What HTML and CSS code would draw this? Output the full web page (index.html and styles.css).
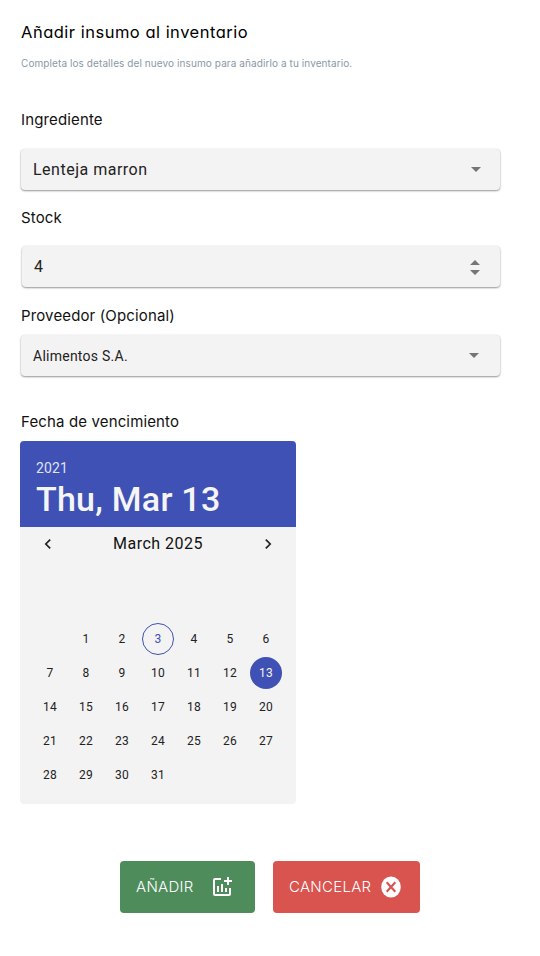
FILE: index.html
```html
<!DOCTYPE html>
<html lang="es">
<head>
<meta charset="utf-8">
<title>Añadir insumo al inventario</title>
<link rel="stylesheet" href="styles.css">
</head>
<body>
<main class="page">
  <h1 class="title"><span>Añadir insumo al inventario</span></h1>
  <p class="subtitle"><span>Completa los detalles del nuevo insumo para añadirlo a tu inventario.</span></p>

  <div class="label label-ingredient"><span>Ingrediente</span></div>
  <div class="field field-ingredient">
    <span class="value">Lenteja marron</span>
    <svg class="caret" width="10" height="5" viewBox="0 0 10 5"><path d="M0 0h10L5 5z"/></svg>
  </div>

  <div class="label label-stock"><span>Stock</span></div>
  <div class="field field-stock">
    <span class="value">4</span>
    <svg class="caret" width="10" height="15" viewBox="0 0 10 15"><path d="M0 5h10L5 0zM0 10h10L5 15z"/></svg>
  </div>

  <div class="label label-supplier"><span>Proveedor (Opcional)</span></div>
  <div class="field field-supplier">
    <span class="value small">Alimentos S.A.</span>
    <svg class="caret" width="10" height="5" viewBox="0 0 10 5"><path d="M0 0h10L5 5z"/></svg>
  </div>

  <div class="label label-date"><span>Fecha de vencimiento</span></div>
  <section class="calendar">
    <header class="cal-head">
      <div class="year"><span>2021</span></div>
      <div class="date"><span>Thu, Mar 13</span></div>
    </header>
    <nav class="cal-nav">
      <svg width="24" height="24" viewBox="0 0 24 24"><path d="M14.200 7.600L9.800 12l4.400 4.400" /></svg>
      <span class="month">March 2025</span>
      <svg width="24" height="24" viewBox="0 0 24 24"><path d="M9.800 7.600L14.200 12l-4.400 4.400" /></svg>
    </nav>
    <div class="days">
      <span></span><span>1</span><span>2</span><span class="today">3</span><span>4</span><span>5</span><span>6</span>
      <span>7</span><span>8</span><span>9</span><span>10</span><span>11</span><span>12</span><span class="selected">13</span>
      <span>14</span><span>15</span><span>16</span><span>17</span><span>18</span><span>19</span><span>20</span>
      <span>21</span><span>22</span><span>23</span><span>24</span><span>25</span><span>26</span><span>27</span>
      <span>28</span><span>29</span><span>30</span><span>31</span>
    </div>
  </section>

  <div class="actions">
    <button class="btn add"><span>AÑADIR</span>
      <svg width="24" height="24" viewBox="0 0 24 24" fill="#fff"><path d="M22 5v2h-3v3h-2V7h-3V5h3V2h2v3h3zM19 19H5V5h6V3H5a2 2 0 0 0-2 2v14a2 2 0 0 0 2 2h14a2 2 0 0 0 2-2v-6h-2v6zM15 13v4h2v-4h-2zM11 17h2V9h-2v8zM9 17v-6H7v6h2z"/></svg>
    </button>
    <button class="btn cancel"><span>CANCELAR</span>
      <svg width="20" height="22" viewBox="0 0 20 22"><ellipse cx="10" cy="11" rx="9.800" ry="10.500" fill="#fff"/><path d="M5.700 6.300l8.600 9.400M14.300 6.300l-8.600 9.400" stroke="#d9534f" stroke-width="2.100"/></svg>
    </button>
  </div>
</main>
</body>
</html>
```
FILE: styles.css
```css
* { box-sizing: border-box; }

body {
  margin: 0;
  background: #fff;
  font-family: Inter, sans-serif;
  color: #111;
}

.page {
  width: 540px;
  height: 956px;
  padding: 20px 40px 0 20px;
}

.title {
  margin: 0 0 0 1px;
  font-size: 16.5px;
  font-weight: 370;
  line-height: 24px;
  letter-spacing: 0.5px;
  font-feature-settings: "cv11";
  color: #000;
}

.subtitle {
  margin: 11px 0 0 1px;
  font-size: 10px;
  line-height: 16px;
  letter-spacing: 0.09px;
  color: #8a98a6;
}

.label {
  margin-left: 1px;
  font-size: 15px;
  line-height: 20px;
  letter-spacing: 0.14px;
}

.label-ingredient { margin-top: 39px; }
.label-stock { margin-top: 18px; }
.label-supplier { margin-top: 19px; }
.label-date { margin-top: 36px; }

.field {
  display: flex;
  align-items: center;
  justify-content: space-between;
  height: 41px;
  margin-left: 1px;
  padding: 0 19px 0 12px;
  border-radius: 4px;
  background: #f3f3f3;
  box-shadow: 0 1px 2px rgba(0, 0, 0, 0.4), 0 0 2px rgba(0, 0, 0, 0.08);
  font-family: Roboto, sans-serif;
  color: #222;
}

.field-ingredient { margin-top: 19px; }
.field-stock { margin: 18px 0 0 2px; padding-right: 20px; }
.field-supplier { margin-top: 9px; padding-right: 21px; }

.value { font-size: 16px; letter-spacing: 0.5px; }
.small { font-size: 14px; letter-spacing: 0.25px; }
.caret { fill: #757575; }
.field-stock .caret { transform: translateY(1px); }

.calendar {
  width: 276px;
  height: 363px;
  margin-top: 9px;
  overflow: hidden;
  border-radius: 4px;
  background: #f3f3f3;
  font-family: Roboto, sans-serif;
}

.cal-head {
  height: 86px;
  padding: 19px 16px 0;
  background: #3f51b5;
  color: #f5f5f5;
}

.year { font-size: 14px; line-height: 16px; letter-spacing: 0.1px; color: #dfe2f3; }
.date { font-size: 34px; font-weight: 500; line-height: 40px; margin-top: 3px; letter-spacing: 0.25px; }

.cal-nav {
  display: flex;
  align-items: center;
  justify-content: space-between;
  height: 34px;
  padding: 0 16px;
}

.cal-nav path { fill: none; stroke: #222; stroke-width: 1.7; }
.month { padding-bottom: 2px; font-size: 16px; letter-spacing: 0.5px; color: #111; }

.days {
  display: grid;
  grid-template-columns: repeat(7, 32px);
  grid-auto-rows: 32px;
  gap: 2px 4px;
  margin: 62px 0 0 14px;
}

.days span {
  display: flex;
  align-items: center;
  justify-content: center;
  border-radius: 50%;
  font-size: 12px;
  letter-spacing: 0.2px;
  color: #222;
}

.days .today { border: 1px solid #3f51b5; color: #3f51b5; }
.days .selected { background: #3f51b5; color: #f3f3f3; }

.actions {
  display: flex;
  gap: 18px;
  margin: 57px 0 0 100px;
}

.btn {
  display: flex;
  align-items: center;
  justify-content: space-between;
  height: 52px;
  padding: 0 16px 1px;
  border: 0;
  border-radius: 4px;
  font-family: Inter, sans-serif;
  font-size: 15px;
  font-weight: 300;
  letter-spacing: 0.28px;
  color: #fff;
}

.add { width: 135px; padding-right: 21px; background: #4f8c5c; }
.cancel { width: 147px; padding-right: 19px; background: #d9534f; }
```
